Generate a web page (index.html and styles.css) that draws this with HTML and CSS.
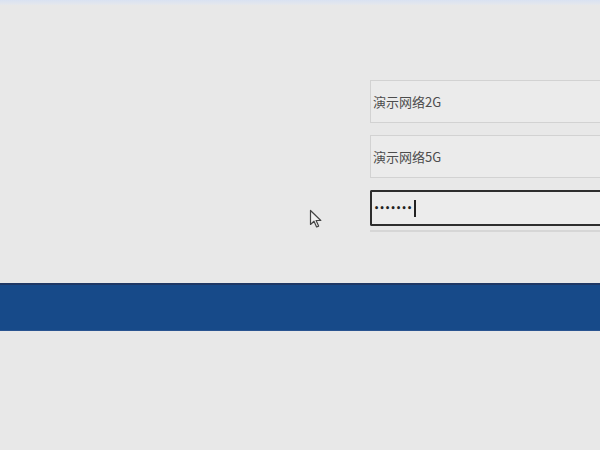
FILE: index.html
```html
<!DOCTYPE html>
<html lang="zh-CN">
  <head>
    <meta charset="UTF-8" />
    <meta name="viewport" content="width=device-width, initial-scale=1.0" />
    <title>网络设置</title>
    <link rel="stylesheet" href="styles.css">
  </head>
  <body>
    <div class="topStrip"></div>
    <div class="formBox">
      <div class="field">演示网络2G</div>
      <div class="field">演示网络5G</div>
      <div class="field active">
        <span class="dots">•••••••</span><span class="caret"></span>
      </div>
      <div class="underline"></div>
    </div>
    <div class="blueBar"></div>
    <svg class="pointer" width="14" height="20" viewBox="0 0 14 20">
      <path d="M1.5 1.5 L1.5 15.5 L5 12.2 L7.6 18 L9.6 17.1 L7.1 11.5 L11.8 11.5 Z" fill="#f2f2f2" stroke="#444" stroke-width="1.2" stroke-linejoin="round" />
    </svg>
  </body>
</html>
```

FILE: styles.css
```css
body {
  margin: 0;
  background-color: #e8e8e8;
  font-family: "Noto Sans CJK SC", "Noto Sans", sans-serif;
  height: 450px;
  overflow: hidden;
  position: relative;
}
.topStrip {
  height: 5px;
  background: linear-gradient(#d9e2f2, #e6e8ec);
}
.formBox {
  margin-left: 370px;
  padding-top: 75px;
  display: flex;
  flex-direction: column;
  gap: 12px;
}
.field {
  height: 41px;
  border: 1px solid #d2d2d2;
  border-right: none;
  background-color: #ebebeb;
  display: flex;
  align-items: center;
  padding-left: 2px;
  font-size: 13px;
  color: #4d4d4d;
}
.active {
  height: 32px;
  border: 2px solid #2e2e2e;
  border-right: none;
  border-radius: 2px 0 0 2px;
  background-color: #ececec;
}
.dots {
  font-family: "DejaVu Sans", sans-serif;
  font-size: 8px;
  font-weight: bold;
  letter-spacing: 0.4px;
  color: #222;
}
.caret {
  display: inline-block;
  width: 2px;
  height: 17px;
  margin-left: 1px;
  background-color: #222;
}
.underline {
  margin-top: -8px;
  height: 2px;
  background-color: #d6d6d6;
}
.blueBar {
  margin-top: 51px;
  height: 45px;
  background-color: #174a89;
  border-top: 2px solid #1f3865;
  border-bottom: 1px solid #2a5490;
}
.pointer {
  position: absolute;
  left: 309px;
  top: 209px;
}
```
